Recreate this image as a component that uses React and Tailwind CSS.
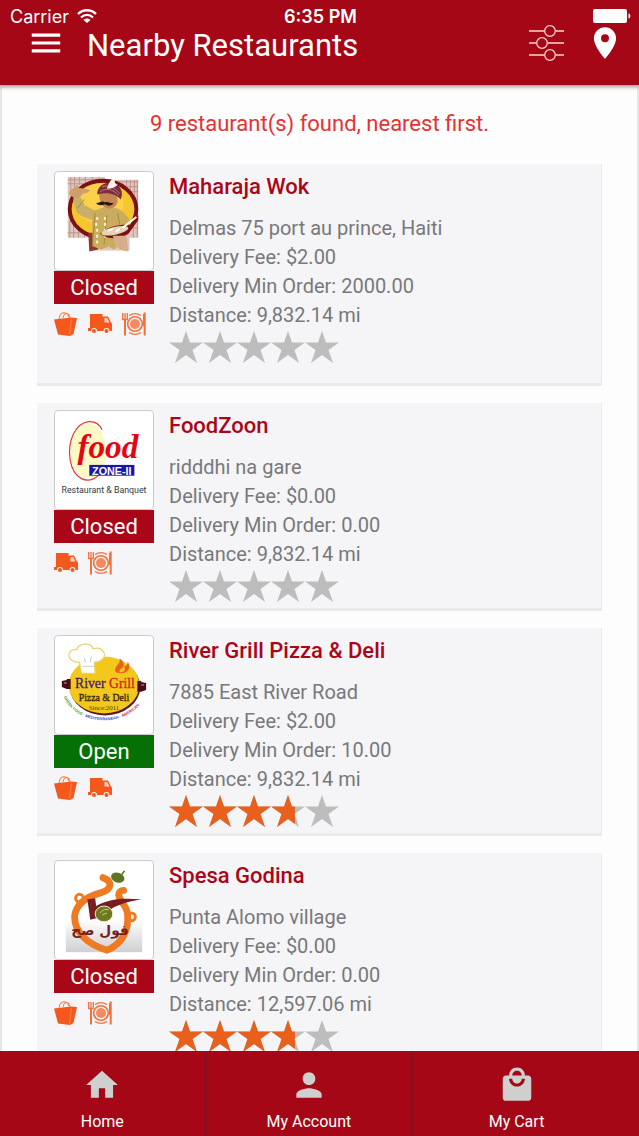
import React, { useState } from "react";
import {
  MdHome,
  MdLocalMall,
  MdLocationOn,
  MdMenu,
  MdPerson,
} from "react-icons/md";

const MaharajaLogo = () => (
  <svg viewBox="0 0 100 100" className="w-full h-full" aria-hidden="true">
    <path d="M13 5h38v3h34v59H76v13H37V67H13z" fill="#dfc6be" />
    <path
      d="M16 5v18M20 5v12M25 5v8M31 5v6M38 5v5M45 5v5M73 8v6M77 8v12M81 8v18M84 8v59M80 50v17M15 50v17M19 55v12M24 59v8M30 63v4M13 8h30M13 12h16M60 10h25M70 15h15M76 20h9M13 62h17M78 57h7"
      stroke="#b08078"
      strokeWidth="1"
      opacity=".7"
    />
    <ellipse cx="49" cy="38" rx="34" ry="29" fill="#f7c52e" stroke="#7b1113" strokeWidth="4" />
    <ellipse cx="45" cy="32" rx="25" ry="20" fill="#fbd95c" opacity=".6" />
    <path d="M34 62h8l2 17-9 2z" fill="#8f3532" />
    <path d="M19 24c3-2 6 0 8 3l3 7c5 2 8 4 11 6l3 9c-7 0-16-2-22-8-2-6-4-11-3-17z" fill="#c8b068" />
    <path d="M14 22c2-5 5-5 7-7 2-3 3-1 3 1l11 2c1 2-2 3-6 4l-4 4c-4 1-8 0-11-4z" fill="#cf9f6b" />
    <path d="M38 40l12-4 13 1c8 3 11 9 15 15l-7 10 2 18-6-1-3-3-4 3-5-3-8 3-8-3-1-16z" fill="#c9ac5c" />
    <path d="M41 42l-3 34M53 44l-3 30M64 42l2 12M30 28l-7 9" stroke="#a48845" fill="none" />
    <path d="M43 47v1M42 53v1M43 59v1M43 65v1M43 71v1M51 47v1M51 53v1M51 59v1M51 65v1" stroke="#fff6da" strokeWidth="2.2" strokeLinecap="round" />
    <path d="M45 21h18l1 9c-2 7-7 8-11 7-5-1-8-8-8-16z" fill="#c48751" />
    <path d="M42 32c4-1 6-3 9-1 3-1 5 1 9 1-3 3-6 3-9 1-3 1-6 2-9-1z" fill="#28150e" />
    <path d="M43 23c0-10 10-14 18-11 7 3 9 10 6 16-5-6-14-8-24-5z" fill="#7c2c3c" />
    <path d="M46 20c6-4 13-3 19 4M48 15c7-2 13 1 18 7" stroke="#b57d7d" fill="none" />
    <path d="M53 17c2-5 3-10 9-10-2 3-1 5 2 6-3 3-6 4-11 4z" fill="#fff1ea" />
    <path d="M46 63c8-8 22-10 32-9l7-10v5L75 63c-7 5-20 7-29 0z" fill="#7b1113" />
    <ellipse cx="61" cy="60" rx="14" ry="4" fill="#e4d3b4" transform="rotate(-12 61 60)" />
    <path d="M69 57L83 46M54 60l5-2M62 61l4-3" stroke="#fff" strokeWidth="2" />
    <path d="M59 65h14l2 16-6-1-2-4-5 1z" fill="#d9ad8b" />
  </svg>
);

const FoodZoneLogo = () => (
  <svg viewBox="0 0 100 100" className="w-full h-full">
    <ellipse cx="34" cy="41" rx="18" ry="28" fill="#fdf9c4" />
    <path d="M48 19C42 7 27 8 19 23c-8 17-4 40 8 46 8 4 16 0 21-8" fill="none" stroke="#e23b32" strokeWidth="1.2" />
    <text x="54" y="48" textAnchor="middle" fill="#e30613" fontFamily="Liberation Serif, serif" fontStyle="italic" fontWeight="700" fontSize="34">food</text>
    <rect x="35" y="55" width="46" height="11" fill="#1717a8" />
    <text x="58" y="65" textAnchor="middle" fill="#fff" fontFamily="Liberation Sans, sans-serif" fontWeight="700" fontSize="11">ZONE-II</text>
    <text x="50" y="84" textAnchor="middle" fill="#333947" fontFamily="Roboto, sans-serif" fontSize="9">Restaurant &amp; Banquet</text>
  </svg>
);

const RiverGrillLogo = () => (
  <svg viewBox="0 0 100 100" className="w-full h-full">
    <path id="river-arc" d="M9 62C22 94 78 94 91 62" fill="none" />
    <ellipse cx="51" cy="52" rx="36" ry="29" fill="#5a1420" />
    <ellipse cx="50" cy="50" rx="36" ry="29" fill="#f3c81c" />
    <path d="M7 46l5-1v-1h4v10h-4l-5-2zM93 48l-5-1v-1h-4v11h4l5-2z" fill="#4a0d14" />
    <path d="M9 48h3M88 50h3" stroke="#c9a0a0" />
    <path d="M25 27c-14 0-14-14-3-13 2-7 15-8 17-1 9-3 15 6 9 11-2 2-5 3-8 3l1 11H27z" fill="#fff" stroke="#e8d36a" strokeWidth="1.2" />
    <path d="M28 31h12M30 22l1 5M37 21l-1 6" stroke="#c9c9d4" />
    <path d="M62 37c-3-6 5-7 4-14 6 4 3 7 5 8 3-1 3-3 3-5 5 7-1 15-12 11z" fill="#e8641b" />
    <path d="M66 37c-1-4 4-4 4-7 3 4 1 7-4 7z" fill="#fbc02d" />
    <text x="51" y="53" textAnchor="middle" fontFamily="Liberation Serif, serif" fontSize="14" fill="#45206f" stroke="#45206f" strokeWidth=".3">
      River <tspan fill="#d8231f" stroke="#d8231f">Grill</tspan>
    </text>
    <text x="50" y="66" textAnchor="middle" fontFamily="Liberation Serif, serif" fontSize="10" fill="#33240f" stroke="#33240f" strokeWidth=".3">Pizza &amp; Deli</text>
    <text x="50" y="76" textAnchor="middle" fontFamily="Liberation Serif, serif" fontSize="7" fill="#54380d">Since:2011</text>
    <text fontFamily="Liberation Sans, sans-serif" fontWeight="700" fontSize="4" fill="#3f9a55">
      <textPath href="#river-arc">
        GREEK FOOD · <tspan fill="#4646b8">MEDITERRANEAN</tspan> · <tspan fill="#c7304c">AMERICAN</tspan>
      </textPath>
    </text>
  </svg>
);

const SpesaLogo = () => (
  <svg viewBox="0 0 100 100" className="w-full h-full">
    <defs>
      <linearGradient id="spesa-shade" x1="0" y1="0" x2="0" y2="1">
        <stop offset="0" stopColor="#fff" />
        <stop offset="1" stopColor="#cfcfd3" />
      </linearGradient>
    </defs>
    <rect x="11" y="60" width="78" height="33" fill="url(#spesa-shade)" />
    <g fill="none" stroke="#ee7a22" strokeLinecap="round">
      <path d="M49 17c11 4 8 12-1 15-15 4-27 12-28 25 0 16 13 28 33 34 15-6 23-20 21-38-2-10-8-11-9-18 0-3 2-5 5-5" strokeWidth="7" />
      <circle cx="25" cy="38" r="4" strokeWidth="3" />
      <circle cx="78" cy="57" r="4" strokeWidth="3" />
    </g>
    <path d="M33 39l8-1 1 8c14-8 28-8 46-7-17 3-31 7-40 18l-12 3z" fill="#7a1d20" />
    <ellipse cx="50" cy="54" rx="9" ry="8" fill="#6d7a1f" stroke="#f3f0dc" strokeWidth="1" />
    <path d="M46 53c3-4 7-4 9-3M48 55l5-2" stroke="#c6d07a" fill="none" />
    <ellipse cx="64" cy="17" rx="7" ry="5" fill="#5f7324" transform="rotate(20 64 17)" />
    <path d="M68 14l3-4" stroke="#5f7324" strokeWidth="1.5" />
    <text x="46" y="76" textAnchor="middle" direction="rtl" fontFamily="DejaVu Sans, sans-serif" fontWeight="700" fontSize="14" fill="#7a1d20">فول صح</text>
  </svg>
);

const BagIcon = () => (
  <svg viewBox="0 0 24 24" className="w-6 h-6" role="img" aria-label="Pickup">
    <path d="M5 7c1-8 8-8 10-2M9 6c1-6 6-6 7 0" fill="none" stroke="#f4844e" strokeWidth="1.1" />
    <path d="M0 7.500l17-2 6 .5-3.500 16L16 24 4 22.500z" fill="#f4581d" />
    <path d="M17.500 7L15.500 23" stroke="#fa9468" strokeWidth=".7" />
  </svg>
);

const TruckIcon = () => (
  <svg viewBox="0 0 24 24" className="w-6 h-6" role="img" aria-label="Delivery">
    <path d="M2 2h12.500v2.500H20l3 6 1 1V19h-2.500a3 3 0 0 0-6 0H9a3 3 0 0 0-6 0H0v-3h2z" fill="#f4581d" />
    <path d="M16.500 6h2.700l2.300 4.500h-5z" fill="#fbd1bf" />
    <circle cx="6" cy="19" r="2" fill="#f4581d" />
    <circle cx="18.500" cy="19" r="2" fill="#f4581d" />
  </svg>
);

const PlateIcon = () => (
  <svg viewBox="0 0 24 24" className="w-6 h-6" role="img" aria-label="Dine in">
    <g fill="none" stroke="#f4703c">
      <path d="M.7 1v6.500h4.600V1M3 1v22" strokeWidth="1.300" />
      <path d="M3 8v15.500M22.700.5v23" strokeWidth="2" />
      <path d="M21.500 2v12" strokeWidth="1" />
      <path d="M7 3.500c4-2.500 8-2.500 12 0M7 20.500c4 2.500 8 2.500 12 0" strokeWidth="1.300" />
      <circle cx="13" cy="12" r="7.300" strokeWidth="1.600" />
    </g>
    <circle cx="13" cy="12" r="5" fill="#f58a5e" />
  </svg>
);

const FilterIcon = () => (
  <svg viewBox="0 0 36 36" className="w-9 h-9" fill="none" stroke="#fbd5cf" strokeWidth="1.3" aria-hidden="true">
    <path d="M0 6h15M27 6h8M0 18h7M19 18h16M0 30h15M27 30h8" />
    <circle cx="21" cy="6" r="5.300" />
    <circle cx="13" cy="18" r="5.300" />
    <circle cx="21" cy="30" r="5.300" />
  </svg>
);

const serviceIcons = {
  pickup: BagIcon,
  delivery: TruckIcon,
  dinein: PlateIcon,
};

const restaurants = [
  {
    id: 1,
    name: "Maharaja Wok",
    address: "Delmas 75 port au prince, Haiti",
    fee: "$2.00",
    minOrder: "2000.00",
    distance: "9,832.14 mi",
    open: false,
    rating: 0,
    services: ["pickup", "delivery", "dinein"],
    Logo: MaharajaLogo,
  },
  {
    id: 2,
    name: "FoodZoon",
    address: "ridddhi na gare",
    fee: "$0.00",
    minOrder: "0.00",
    distance: "9,832.14 mi",
    open: false,
    rating: 0,
    services: ["delivery", "dinein"],
    Logo: FoodZoneLogo,
  },
  {
    id: 3,
    name: "River Grill Pizza & Deli",
    address: "7885 East River Road",
    fee: "$2.00",
    minOrder: "10.00",
    distance: "9,832.14 mi",
    open: true,
    rating: 3.7,
    services: ["pickup", "delivery"],
    Logo: RiverGrillLogo,
  },
  {
    id: 4,
    name: "Spesa Godina",
    address: "Punta Alomo village",
    fee: "$0.00",
    minOrder: "0.00",
    distance: "12,597.06 mi",
    open: false,
    rating: 3.7,
    services: ["pickup", "dinein"],
    Logo: SpesaLogo,
  },
];

const tabs = [
  { label: "Home", Icon: MdHome },
  { label: "My Account", Icon: MdPerson },
  { label: "My Cart", Icon: MdLocalMall },
];

const StarRow = ({ color }) => (
  <svg viewBox="0 0 170 34" className="w-[170px] h-[34px] max-w-none" fill={color} aria-hidden="true">
    {[0, 34, 68, 102, 136].map((x) => (
      <path
        key={x}
        transform={`translate(${x} 0)`}
        d="M17 1l4 11.500h13L23.500 20l4.500 13-11-8-11 8 4.500-13L0 12.500h13z"
      />
    ))}
  </svg>
);

const Stars = ({ rating }) => (
  <div className="relative w-[170px] h-[34px]" role="img" aria-label={`${rating} out of 5`}>
    <StarRow color="#bdbdbd" />
    <div
      className="absolute left-0 top-0 overflow-hidden"
      style={{ width: `${(rating / 5) * 100}%` }}
    >
      <StarRow color="#e8601c" />
    </div>
  </div>
);

const StatusBar = () => (
  <div className="grid grid-cols-3 items-center h-8 pl-[10px] pr-2 text-white text-[18px] font-['Inter',sans-serif]">
    <div className="flex items-center gap-2">
      <span>Carrier</span>
      <svg viewBox="0 0 20 14" className="w-5 h-[14px]" aria-hidden="true">
        <path d="M1 5c5-5 13-5 18 0M4 8.500c3.500-3.500 8.500-3.500 12 0" fill="none" stroke="#fff" strokeWidth="2.300" />
        <path d="M6.500 11c2-2 5-2 7 0L10 14z" fill="#fff" />
      </svg>
    </div>
    <span className="text-center font-semibold">6:35 PM</span>
    <svg viewBox="0 0 38 14" className="w-[38px] h-[14px] justify-self-end" fill="#fff" aria-hidden="true">
      <rect width="34" height="14" rx="2" />
      <path d="M35.500 4.500c2.500.5 2.500 4.500 0 5z" />
    </svg>
  </div>
);

const RestaurantCard = ({ restaurant }) => {
  const { name, address, fee, minOrder, distance, open, rating, services, Logo } =
    restaurant;

  return (
    <li
      className={`flex items-start gap-[15px] bg-[#f5f4f6] pl-[17px] pt-[7px] border-b-3 border-r border-[#ebeaec] ${
        services.length > 2 ? "pb-[19px]" : "pb-[5px]"
      }`}
    >
      <div className="w-[100px] shrink-0">
        <div className="h-[100px] bg-white border border-[#cbcace] rounded">
          <Logo />
        </div>
        <p
          className={`h-[33px] leading-[33px] text-center text-[22px] text-white ${
            open ? "bg-[#057005]" : "bg-[#a90717]"
          }`}
        >
          {open ? "Open" : "Closed"}
        </p>
        <div className="flex gap-[10px] pt-2">
          {services.map((service) => {
            const Icon = serviceIcons[service];
            return <Icon key={service} />;
          })}
        </div>
      </div>

      <div className="flex-1 text-[20px] leading-[29px] text-[#77797b]">
        <h2 className="h-[43px] leading-8 text-[22px] font-medium text-[#a90717]">
          {name}
        </h2>
        <p>{address}</p>
        <p>Delivery Fee: {fee}</p>
        <p>Delivery Min Order: {minOrder}</p>
        <p>Distance: {distance}</p>
        <Stars rating={rating} />
      </div>
    </li>
  );
};

export default function App() {
  const [activeTab, setActiveTab] = useState("Home");

  return (
    <div className="flex flex-col h-screen bg-[#fdfdfd] font-['Roboto',sans-serif]">
      {/* Header */}
      <header className="relative z-10 h-[85px] shrink-0 bg-[#a50716] shadow-[0_2px_4px_rgba(0,0,0,0.4)]">
        <StatusBar />
        <div className="flex items-center -mt-[10px] h-[42px] pl-[27px] pr-[15px] text-white">
          <button type="button" aria-label="Menu">
            <MdMenu size={38} />
          </button>
          <h1 className="flex-1 pl-[22px] pt-[6px] text-[31px] leading-[42px]">
            Nearby Restaurants
          </h1>
          <button type="button" aria-label="Filter">
            <FilterIcon />
          </button>
          <button type="button" aria-label="Location" className="ml-[21px]">
            <MdLocationOn size={38} />
          </button>
        </div>
      </header>

      {/* Restaurant list */}
      <main className="flex-1 min-h-0 overflow-y-auto [scrollbar-width:none] px-[35px] border-x-2 border-[#e6e5e7]">
        <p className="pt-[23px] pb-[24px] text-center text-[22px] leading-8 text-[#e53232]">
          9 restaurant(s) found, nearest first.
        </p>
        <ul className="flex flex-col gap-[17px] pb-4">
          {restaurants.map((restaurant) => (
            <RestaurantCard key={restaurant.id} restaurant={restaurant} />
          ))}
        </ul>
      </main>

      {/* Bottom tabs */}
      <nav className="h-[85px] shrink-0 bg-[#a50716]">
        <div className="grid grid-cols-3 h-full w-[97%]">
          {tabs.map(({ label, Icon }) => (
            <button
              key={label}
              type="button"
              aria-pressed={activeTab === label}
              onClick={() => setActiveTab(label)}
              className="flex flex-col items-center justify-end gap-[6px] pb-[2px] border-r-2 border-[#7c1521] last:border-r-0 text-[16px] leading-6 text-white"
            >
              <Icon size={38} color="#cfcfcf" />
              {label}
            </button>
          ))}
        </div>
      </nav>
    </div>
  );
}
